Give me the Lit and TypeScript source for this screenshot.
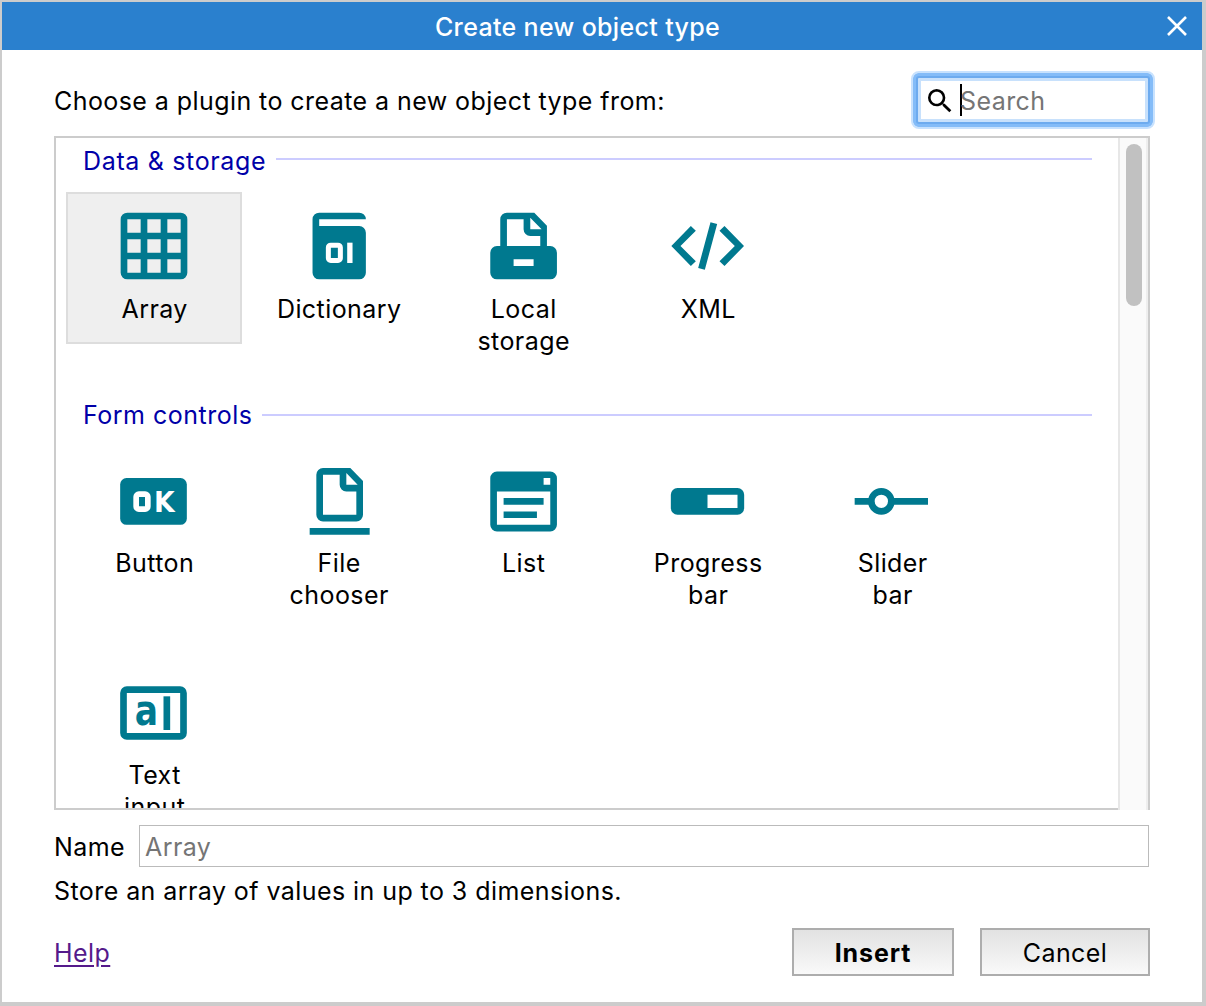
import { LitElement, html, svg, css, SVGTemplateResult } from "lit";
import { customElement, property } from "lit/decorators.js";

interface Plugin {
  name: string;
  icon: string;
  selected?: boolean;
}

interface Section {
  title: string;
  key: string;
  plugins: Plugin[];
}

const SECTIONS: Section[] = [
  {
    title: "Data & storage",
    key: "data",
    plugins: [
      { name: "Array", icon: "array", selected: true },
      { name: "Dictionary", icon: "dictionary" },
      { name: "Local storage", icon: "storage" },
      { name: "XML", icon: "xml" },
    ],
  },
  {
    title: "Form controls",
    key: "form",
    plugins: [
      { name: "Button", icon: "button" },
      { name: "File chooser", icon: "file" },
      { name: "List", icon: "list" },
      { name: "Progress bar", icon: "progress" },
      { name: "Slider bar", icon: "slider" },
      { name: "Text input", icon: "text" },
    ],
  },
];

// Icons are drawn on a 24-unit grid; x and y are small optical adjustments.
const ICONS: Record<string, { x: number; y: number; art: SVGTemplateResult }> = {
  array: {
    x: 0,
    y: 0,
    art: svg`<path fill-rule="evenodd" d="M4 2H20A2 2 0 0 1 22 4V20A2 2 0 0 1 20 22H4A2 2 0 0 1 2 20V4A2 2 0 0 1 4 2ZM4 4V8H8V4ZM10 4V8H14V4ZM16 4V8H20V4ZM4 10V14H8V10ZM10 10V14H14V10ZM16 10V14H20V10ZM4 16V20H8V16ZM10 16V20H14V16ZM16 16V20H20V16Z"/>`,
  },
  dictionary: {
    x: -0.36,
    y: 0,
    art: svg`<path d="M6 2H18A2 2 0 0 1 20 4H6V6H18A2 2 0 0 1 20 8V20A2 2 0 0 1 18 22H6A2 2 0 0 1 4 20V4A2 2 0 0 1 6 2Z"/>
      <rect class="cut-line" x="8.75" y="11.75" width="3.6" height="4.6" rx="0.7" stroke-width="1.5"/>
      <rect class="cut" x="14.4" y="11" width="1.6" height="6.1"/>`,
  },
  storage: {
    x: -0.18,
    y: 0,
    art: svg`<path fill-rule="evenodd" d="M5 12V4A2 2 0 0 1 7 2H15.2L19 5.9V12H20A2 2 0 0 1 22 14V20A2 2 0 0 1 20 22H4A2 2 0 0 1 2 20V14A2 2 0 0 1 4 12ZM7 4V12H17V9H14A2 2 0 0 1 12 7V4ZM14 3.5V7H17.4ZM9 16V18H15V16Z"/>`,
  },
  xml: {
    x: -0.15,
    y: 0,
    art: svg`<path d="M1.15 12L7 6L8.5 7.4L3.9 12L8.5 16.6L7 18ZM22.95 12L17.1 6L15.6 7.4L20.2 12L15.6 16.6L17.1 18ZM12.9 4.9L14.9 5.4L11.2 19.1L9.2 18.6Z"/>`,
  },
  button: {
    x: 0.15,
    y: -0.13,
    art: svg`<rect x="2" y="5" width="20" height="14" rx="1.9"/>
      <rect class="cut-line" x="6.8" y="9.8" width="3.5" height="4.5" rx="0.8" stroke-width="1.7"/>
      <text class="cut letter" x="12.15" y="15.1" font-size="8.4" textLength="6.2" lengthAdjust="spacingAndGlyphs">K</text>`,
  },
  file: {
    x: -0.5,
    y: -0.13,
    art: svg`<path fill-rule="evenodd" d="M7 2H15.2L19 5.9V16A2 2 0 0 1 17 18H7A2 2 0 0 1 5 16V4A2 2 0 0 1 7 2ZM7 4V16H17V9H14A2 2 0 0 1 12 7V4ZM14 3.5V7H17.4ZM3 20H21V22H3Z"/>`,
  },
  list: {
    x: -0.18,
    y: -0.13,
    art: svg`<path fill-rule="evenodd" d="M4 3H20A2 2 0 0 1 22 5V19A2 2 0 0 1 20 21H4A2 2 0 0 1 2 19V5A2 2 0 0 1 4 3ZM18 5V7H20V5ZM4 9V19H20V9ZM6 11H18V13H6ZM6 15H16V17H6Z"/>`,
  },
  progress: {
    x: -0.15,
    y: -0.1,
    art: svg`<path fill-rule="evenodd" d="M3 8H21A2 2 0 0 1 23 10V14A2 2 0 0 1 21 16H3A2 2 0 0 1 1 14V10A2 2 0 0 1 3 8ZM12 10V14H21V10Z"/>`,
  },
  slider: {
    x: 0.2,
    y: -0.1,
    art: svg`<path d="M1 11H6V13H1ZM12 11H23V13H12Z"/><circle class="line" cx="9" cy="12" r="3" stroke-width="2"/>`,
  },
  text: {
    x: 0.15,
    y: 0,
    art: svg`<rect class="line" x="3" y="5" width="18" height="14" rx="1" stroke-width="2"/>
      <text class="letter" x="6.4" y="15.55" font-size="12.7" textLength="7" lengthAdjust="spacingAndGlyphs">a</text>
      <rect x="15" y="7" width="2" height="10.1"/>`,
  },
};

@customElement("plugin-icon")
export class PluginIcon extends LitElement {
  @property() name = "";

  static styles = css`
    :host { display: block; width: 80px; height: 80px; letter-spacing: 0; }
    svg { display: block; width: 80px; height: 80px; fill: #00798f; }
    .cut { fill: #fff; }
    .cut-line { fill: none; stroke: #fff; }
    .line { fill: none; stroke: #00798f; }
    .letter { font-family: "DejaVu Sans", sans-serif; font-weight: 700; }
  `;

  render() {
    const icon = ICONS[this.name];
    return html`<svg viewBox="${icon.x} ${icon.y} 24 24" aria-hidden="true">${icon.art}</svg>`;
  }
}

@customElement("app-root")
export class AppRoot extends LitElement {
  static styles = css`
    :host {
      display: block;
      width: 1206px;
      height: 1006px;
      font-family: Inter, "Liberation Sans", sans-serif;
      font-size: 25px;
      font-weight: 420;
      line-height: 32px;
      letter-spacing: 0.43px;
      color: #000;
    }
    * { box-sizing: border-box; }
    .dialog {
      display: flex;
      flex-direction: column;
      width: 1206px;
      height: 1006px;
      background: #fff;
      border: solid #ccc;
      border-width: 2px 4px 4px 2px;
    }
    .caption {
      display: grid;
      grid-template-columns: 1fr 50px;
      align-items: center;
      height: 48px;
      background: #2a80ce;
      color: #fff;
    }
    .title { text-align: center; font-weight: 550; letter-spacing: 0.34px; padding: 2px 0 0 1px; }
    .close { display: block; width: 20px; height: 20px; margin-left: 15px; stroke: #fff; stroke-width: 2.6; fill: none; }
    .body { display: flex; flex-direction: column; flex: 1; padding: 31px 52px 26px; }
    .top { display: flex; justify-content: space-between; height: 38px; }
    .prompt { padding: 4px 0 0; }
    .search {
      display: flex;
      align-items: center;
      width: 244px;
      height: 58px;
      margin: -10px -5px 0 0;
      padding: 0 8px 0 11px;
      color: #757575;
      border: 2px solid #c8e2fe;
      border-radius: 8px;
      box-shadow: inset 0 0 0 3px #84bcf8, inset 0 0 0 5px #6dabef, inset 0 0 0 8px #c8e1fc;
    }
    .glass { width: 32px; height: 32px; fill: #000; margin-top: 2px; }
    .caret { width: 2px; height: 32px; margin-left: 4px; background: #000; }
    .hint { margin: 2px 0 0 -2px; }
    .list {
      display: flex;
      height: 674px;
      margin-top: 17px;
      border: 2px solid #ccc;
      border-bottom: 0;
    }
    .scroll { flex: 1; overflow: hidden; border-bottom: 2px solid #ccc; }
    .track {
      width: 30px;
      padding: 6px 4px 0 6px;
      background: #fafafa;
      border: solid #e7e7e7;
      border-width: 0 2px;
      border-right-color: #eee;
    }
    .thumb { width: 16px; height: 162px; border-radius: 8px; background: #c1c1c1; }
    .section { height: 254px; }
    .head { display: flex; align-items: center; gap: 10px; height: 46px; padding: 0 26px 0 27px; color: #0000a8; letter-spacing: 0.66px; }
    .head::after { content: ""; flex: 1; height: 2px; background: #ccf; margin-top: -4px; }
    .form .head { letter-spacing: 0.5px; }
    .form .head::after { margin-top: 0; }
    .tiles {
      display: grid;
      grid-template-columns: repeat(5, 176px);
      grid-auto-rows: 152px;
      gap: 60px 8.5px;
      padding: 8px 0 0 10px;
    }
    .tile { display: flex; flex-direction: column; align-items: center; padding: 11.7px 0 0; border: 2px solid transparent; text-align: center; }
    .tile plugin-icon { margin-left: -0.6px; margin-bottom: 7.3px; }
    .form .tile { padding-top: 13px; }
    .form .tile plugin-icon { margin-bottom: 6px; }
    .selected { background: #efefef; border-color: #ddd; }
    .label { width: min-content; margin-left: 1.4px; }
    .name-row { display: flex; align-items: center; gap: 14px; margin-top: 15px; }
    .name { padding-top: 2px; width: 71px; }
    .input { flex: 1; height: 42px; border: 1px solid #bbb; padding: 5px 5px 3px; color: #757575; margin-right: 1px; }
    .about { margin-top: 8px; }
    .actions { display: flex; align-items: center; height: 48px; margin-top: 21px; gap: 26px; }
    .help { color: #551a8b; text-decoration: underline; text-decoration-thickness: 2px; text-underline-offset: 3px; margin-right: auto; padding-top: 2px; }
    .btn {
      height: 48px;
      border: 2px solid #adadad;
      background: linear-gradient(#e2e2e2, #f9f9f9);
      text-align: center;
      line-height: 46px;
    }
    .insert { width: 162px; font-weight: 700; letter-spacing: 0.9px; }
    .cancel { width: 170px; }
  `;

  private renderTile(p: Plugin) {
    return html`<div class="tile ${p.selected ? "selected" : ""}">
      <plugin-icon name=${p.icon}></plugin-icon>
      <div class="label">${p.name}</div>
    </div>`;
  }

  render() {
    return html`<div class="dialog">
      <div class="caption">
        <div class="title">Create new object type</div>
        <svg class="close" viewBox="0 0 20 20"><path d="M1 1L19 19M19 1L1 19" /></svg>
      </div>
      <div class="body">
        <div class="top">
          <div class="prompt">Choose a plugin to create a new object type from:</div>
          <div class="search">
            <svg class="glass" viewBox="0 0 24 24"><path d="M15.5 14h-.79l-.28-.27A6.47 6.47 0 0 0 16 9.5 6.5 6.5 0 1 0 9.5 16c1.61 0 3.09-.59 4.23-1.57l.27.28v.79l5 4.99L20.49 19l-4.99-5zm-6 0C7.01 14 5 11.99 5 9.5S7.01 5 9.5 5 14 7.01 14 9.5 11.99 14 9.5 14z" /></svg>
            <div class="caret"></div>
            <span class="hint">Search</span>
          </div>
        </div>
        <div class="list">
          <div class="scroll">
            ${SECTIONS.map(
              (s) => html`<div class="section ${s.key}">
                <div class="head"><span>${s.title}</span></div>
                <div class="tiles">${s.plugins.map((p) => this.renderTile(p))}</div>
              </div>`
            )}
          </div>
          <div class="track"><div class="thumb"></div></div>
        </div>
        <div class="name-row">
          <span class="name">Name</span>
          <div class="input">Array</div>
        </div>
        <div class="about">Store an array of values in up to 3 dimensions.</div>
        <div class="actions">
          <a class="help">Help</a>
          <div class="btn insert">Insert</div>
          <div class="btn cancel">Cancel</div>
        </div>
      </div>
    </div>`;
  }
}
